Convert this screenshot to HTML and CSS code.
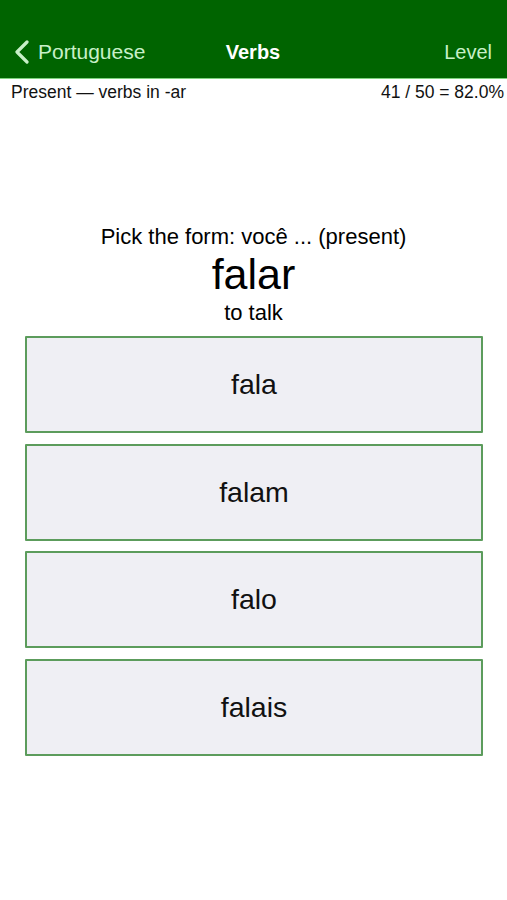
FILE: index.html
```html
<!DOCTYPE html>
<html>
<head>
<meta charset="utf-8">
<link rel="stylesheet" href="styles.css">
</head>
<body>
<header class="navbar">
  <div class="nav-row">
    <a class="back">
      <svg class="chev" width="18" height="24" viewBox="0 0 18 24"><path d="M14 2 L4 12 L14 22" fill="none" stroke="currentColor" stroke-width="3.2" stroke-linecap="round" stroke-linejoin="round"/></svg>
      <span>Portuguese</span>
    </a>
    <div class="title">Verbs</div>
    <a class="level">Level</a>
  </div>
</header>
<div class="status">
  <span>Present — verbs in -ar</span>
  <span>41 / 50 = 82.0%</span>
</div>
<main class="quiz">
  <div class="prompt">Pick the form: você ... (present)</div>
  <div class="word">falar</div>
  <div class="meaning">to talk</div>
  <div class="choices">
    <button class="choice">fala</button>
    <button class="choice">falam</button>
    <button class="choice">falo</button>
    <button class="choice">falais</button>
  </div>
</main>
</body>
</html>
```
FILE: styles.css
```css
html, body {
  margin: 0;
  padding: 0;
  background: #ffffff;
  font-family: "Liberation Sans", Arial, sans-serif;
  color: #000;
}
.navbar {
  background: #006400;
  height: 78px;
  border-bottom: 1px solid #7fd27f;
  box-sizing: content-box;
}
.nav-row {
  height: 78px;
  display: grid;
  grid-template-columns: 1fr auto 1fr;
  align-items: center;
  padding: 26px 15px 0 14px;
  box-sizing: border-box;
}
.back {
  display: flex;
  align-items: center;
  gap: 7px;
  color: #c8f0c8;
  font-size: 21px;
  justify-self: start;
}
.chev {
  display: block;
  margin-left: -1px;
}
.title {
  color: #ffffff;
  font-weight: bold;
  font-size: 20px;
  text-align: center;
}
.level {
  color: #c8f0c8;
  font-size: 20px;
  justify-self: end;
}
.status {
  display: flex;
  justify-content: space-between;
  padding: 1px 3px 0 11px;
  height: 24px;
  line-height: 24px;
  font-size: 17.5px;
  color: #111;
}
.quiz {
  padding-top: 121px;
  display: flex;
  flex-direction: column;
  align-items: center;
}
.prompt {
  font-size: 22px;
  line-height: 24px;
}
.word {
  font-size: 43px;
  line-height: 50px;
}
.meaning {
  font-size: 22px;
  line-height: 24px;
  margin-top: 2px;
}
.choices {
  margin-top: 11px;
  width: 458px;
  margin-left: 1px;
  display: flex;
  flex-direction: column;
  gap: 10.5px;
}
.choice {
  height: 97px;
  background: #efeff4;
  border: 2px solid #5c9c5c;
  border-radius: 1px;
  font-family: "Liberation Sans", Arial, sans-serif;
  font-size: 28.5px;
  color: #111;
  padding: 0;
}
```
